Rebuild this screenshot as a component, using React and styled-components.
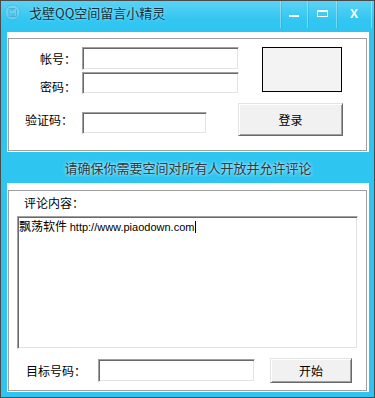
import styled, { createGlobalStyle } from "styled-components"

const GlobalStyle = createGlobalStyle`
  html, body {
    margin: 0;
    padding: 0;
    overflow: hidden;
    background: #ffffff;
  }
`

const cjk = `"Noto Sans CJK SC", "Liberation Sans", sans-serif`

const Window = styled.div`
  width: 375px;
  height: 398px;
  box-sizing: border-box;
  border: 1px solid #4a4a4a;
  background: #2ec5f1;
  display: flex;
  flex-direction: column;
  font-family: ${cjk};
  font-size: 12px;
  color: #000;
`

const TitleBar = styled.div`
  height: 31px;
  flex-shrink: 0;
  display: flex;
  align-items: flex-start;
  background: linear-gradient(#5bd2f5, #33c6f1 60%, #2ec5f1);
`

const AppIcon = styled.svg`
  width: 17px;
  height: 17px;
  margin: 3px 0 0 3px;
  flex-shrink: 0;
`

const Title = styled.div`
  margin-left: 8px;
  padding-top: 4px;
  line-height: 16px;
  font-size: 13px;
  color: #12323f;
  text-shadow: 0 0 3px rgba(255, 255, 255, 0.55);
`

const Controls = styled.div`
  margin-left: auto;
  margin-right: 2px;
  display: flex;
  height: 27px;
  border-right: 1px solid rgba(255, 255, 255, 0.35);
`

const Control = styled.div`
  width: ${(p) => p.$w}px;
  height: 100%;
  box-sizing: border-box;
  border-left: 1px solid rgba(255, 255, 255, 0.35);
  box-shadow: inset 1px 0 0 rgba(0, 90, 130, 0.12);
  display: flex;
  align-items: center;
  justify-content: center;
`

const MinGlyph = styled.div`
  width: 10px;
  height: 2px;
  margin-top: 3px;
  background: #fff;
`

const MaxGlyph = styled.div`
  width: 11px;
  height: 7px;
  margin-top: -3px;
  box-sizing: border-box;
  border: 1px solid #fff;
  border-top-width: 2px;
`

const CloseGlyph = styled.div`
  color: #fff;
  font-family: "Liberation Sans", sans-serif;
  font-weight: bold;
  font-size: 12px;
  line-height: 12px;
  margin-top: -2px;
`

const Body = styled.div`
  flex: 1;
  display: flex;
  flex-direction: column;
  padding: 0 5px 5px 6px;
`

const Panel = styled.div`
  background: #fff;
  display: flex;
  padding: ${(p) => p.$top}px 2px 1px 1px;
`

const GroupBox = styled.div`
  flex: 1;
  height: ${(p) => p.$h}px;
  box-sizing: border-box;
  border: 1px solid #a0a0a0;
  box-shadow: 1px 1px 0 #fff;
  display: flex;
  flex-direction: column;
`

const Row = styled.div`
  display: flex;
  align-items: ${(p) => p.$align || "center"};
  margin-top: ${(p) => p.$mt || 0}px;
`

const Stack = styled.div`
  display: flex;
  flex-direction: column;
  gap: 2px;
`

const Label = styled.div`
  width: ${(p) => p.$w}px;
  padding-right: ${(p) => p.$pr || 0}px;
  margin-top: ${(p) => p.$mt || 0}px;
  box-sizing: border-box;
  text-align: right;
  line-height: 14px;
  flex-shrink: 0;
`

const Sunken = styled.div`
  width: ${(p) => p.$w}px;
  height: ${(p) => p.$h}px;
  margin-top: ${(p) => p.$mt || 0}px;
  margin-left: ${(p) => p.$ml || 0}px;
  box-sizing: border-box;
  background: #fff;
  border: 1px solid;
  border-color: #a0a0a0 #fff #fff #a0a0a0;
  box-shadow: inset 1px 1px 0 #696969, inset -1px -1px 0 #e3e3e3;
  flex-shrink: 0;
`

const Captcha = styled.div`
  width: 80px;
  height: 45px;
  margin-left: 23px;
  box-sizing: border-box;
  border: 1px solid #000;
  background: #f3f3f3;
`

const Button = styled.div`
  width: ${(p) => p.$w}px;
  height: ${(p) => p.$h}px;
  margin-left: ${(p) => p.$ml || 0}px;
  box-sizing: border-box;
  background: #f1f1f1;
  border: 1px solid;
  border-color: #e3e3e3 #696969 #696969 #e3e3e3;
  box-shadow: inset 1px 1px 0 #fff, inset -1px -1px 0 #a0a0a0;
  display: flex;
  align-items: center;
  justify-content: center;
  font-size: 12px;
  flex-shrink: 0;
`

const Notice = styled.div`
  height: 31px;
  display: flex;
  align-items: center;
  justify-content: center;
  font-size: 13px;
  color: #2b3a40;
  text-shadow: 0 0 3px rgba(220, 245, 255, 0.9), 0 0 5px rgba(220, 245, 255, 0.6);
`

const Caption = styled.div`
  margin: 5px 0 0 15px;
  line-height: 14px;
`

const Editor = styled(Sunken)`
  padding: 2px 0 0 1px;
  line-height: 14px;
  white-space: nowrap;
`

const Latin = styled.span`
  font-family: "Liberation Sans", sans-serif;
  font-size: 11px;
`

const Caret = styled.span`
  display: inline-block;
  width: 1px;
  height: 12px;
  margin-left: 1px;
  vertical-align: -2px;
  background: #000;
`

export default function App() {
  return (
    <>
      <GlobalStyle />
      <Window>
        <TitleBar>
          <AppIcon viewBox="0 0 17 17">
            <circle cx="8.5" cy="8.5" r="7.5" fill="rgba(255,255,255,0.18)" stroke="#4aa8c8" strokeOpacity="0.55" />
            <path d="M5 4.5h6l1.5 1.5v6.5h-7.5z" fill="none" stroke="#3f9fc2" strokeOpacity="0.6" />
            <rect x="6.5" y="4.5" width="3.5" height="2.5" fill="#3f9fc2" fillOpacity="0.45" />
            <rect x="6.5" y="9" width="4.5" height="3.5" fill="#3f9fc2" fillOpacity="0.35" />
          </AppIcon>
          <Title>戈壁QQ空间留言小精灵</Title>
          <Controls>
            <Control $w={27}>
              <MinGlyph />
            </Control>
            <Control $w={29}>
              <MaxGlyph />
            </Control>
            <Control $w={35}>
              <CloseGlyph>X</CloseGlyph>
            </Control>
          </Controls>
        </TitleBar>

        <Body>
          <Panel $top={6}>
            <GroupBox $h={113}>
              <Row $align="flex-start" $mt={8}>
                <Stack>
                  <Row>
                    <Label $w={73} $pr={6}>帐号：</Label>
                    <Sunken $w={157} $h={23} />
                  </Row>
                  <Row>
                    <Label $w={73} $pr={6} $mt={8}>密码：</Label>
                    <Sunken $w={157} $h={22} />
                  </Row>
                </Stack>
                <Captcha />
              </Row>
              <Row $align="flex-start" $mt={9}>
                <Label $w={73} $pr={9} style={{ alignSelf: "center" }}>
                  验证码：
                </Label>
                <Sunken $w={125} $h={22} $mt={9} />
                <Button $w={105} $h={33} $ml={31}>
                  登录
                </Button>
              </Row>
            </GroupBox>
          </Panel>

          <Notice>请确保你需要空间对所有人开放并允许评论</Notice>

          <Panel $top={7}>
            <GroupBox $h={201}>
              <Caption>评论内容：</Caption>
              <Editor $w={341} $h={133} $mt={6} $ml={8}>
                飘荡软件 <Latin>http://www.piaodown.com</Latin>
                <Caret />
              </Editor>
              <Row $mt={9}>
                <Label $w={77}>目标号码：</Label>
                <Sunken $w={157} $h={23} $ml={12} />
                <Button $w={82} $h={25} $ml={15}>
                  开始
                </Button>
              </Row>
            </GroupBox>
          </Panel>
        </Body>
      </Window>
    </>
  )
}
